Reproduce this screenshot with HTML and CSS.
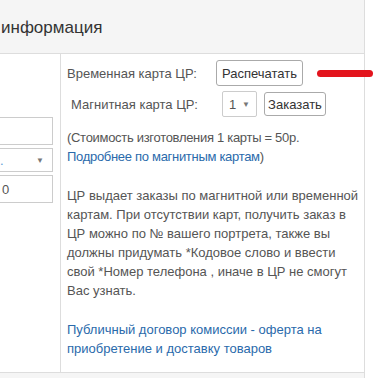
FILE: index.html
```html
<!DOCTYPE html>
<html>

<head>
  <title>Оформление заказа</title>
  <link rel="stylesheet" href="styles.css">
</head>

<body>
  <div class="panel">
    <div class="panel-heading">
      <h3 class="panel-title">информация</h3>
    </div>

    <div class="panel-body">
      <div class="col-left">
        <div class="field"></div>
        <div class="field field-select"><span class="field-value">.</span><span class="caret">&#9660;</span></div>
        <div class="field field-number"><span class="field-value">0</span></div>
      </div>

      <div class="col-right">
        <div class="card-row">
          <span class="card-label">Временная карта ЦР:</span>
          <button type="button" class="btn btn-print">Распечатать</button>
        </div>

        <div class="card-row">
          <span class="card-label card-label-indent">Магнитная карта ЦР:</span>
          <div class="select-small">1<span class="caret">&#9660;</span></div>
          <button type="button" class="btn btn-order">Заказать</button>
        </div>

        <p class="note note-price">
          (Стоимость изготовления 1 карты = 50р.<br>
          <a href="#">Подробнее по магнитным картам</a>)
        </p>

        <p class="note">
          ЦР выдает заказы по магнитной или временной картам. При отсутствии карт, получить заказ в ЦР можно по №
          вашего портрета, также вы должны придумать *Кодовое слово и ввести свой *Номер телефона , иначе в ЦР не
          смогут Вас узнать.
        </p>

        <p class="note note-last">
          <a href="#">Публичный договор комиссии - оферта на приобретение и доставку товаров</a>
        </p>
      </div>
    </div>

    <div class="panel-footer"></div>
  </div>

  <!-- red marker drawn over the page -->
  <span class="marker"></span>
</body>

</html>
```

FILE: styles.css
```css
body {
  margin: 0;
  font-family: "Liberation Sans", Arial, sans-serif;
  font-size: 13px;
  color: #555;
  background-color: #fff;
  overflow: hidden;
}

.panel {
  width: 366px;
  margin-left: -1px;
  border: 1px solid #ddd;
  border-top: none;
  box-sizing: border-box;
}

.panel-heading {
  height: 54px;
  display: flex;
  align-items: center;
  background-color: #f5f5f5;
  border-bottom: 1px solid #ddd;
  box-sizing: border-box;
  padding: 2px 0 0 1px;
}

.panel-title {
  margin: 0;
  font-weight: 400;
  font-size: 17px;
  color: #333;
}

.panel-body {
  display: flex;
}

.col-left {
  width: 61px;
  flex-shrink: 0;
  padding: 63px 8px 0 0;
  box-sizing: border-box;
  border-right: 1px solid #ddd;
  overflow: hidden;
  display: flex;
  flex-direction: column;
  gap: 3px;
}

.field {
  width: 90px;
  height: 28px;
  margin-left: -37px;
  border: 1px solid #ccc;
  box-sizing: border-box;
  background-color: #fff;
  display: flex;
  align-items: center;
  color: #555;
}

.field-select {
  height: 24px;
  padding: 0 8px 0 36px;
  justify-content: space-between;
}

.field-select .field-value {
  color: #5b9bd5;
}

.field-number {
  padding-left: 38px;
}

.caret {
  font-size: 8px;
  color: #777;
}

.col-right {
  flex: 1;
  padding: 6px 4px 0 6px;
}

.card-row {
  display: flex;
  align-items: center;
  margin-bottom: 5px;
}

.card-label {
  width: 149px;
  flex-shrink: 0;
}

.card-label-indent {
  padding-left: 4px;
  width: 151px;
}

.btn {
  font-family: "Liberation Sans", Arial, sans-serif;
  font-size: 13px;
  color: #333;
  background-color: #fff;
  border: 1px solid #aaa;
  border-radius: 3px;
  padding: 0 2px;
  cursor: pointer;
}

.btn-print {
  height: 26px;
  width: 87px;
}

.btn-order {
  height: 24px;
  width: 62px;
}

.select-small {
  width: 35px;
  height: 26px;
  border: 1px solid #ccc;
  border-radius: 2px;
  box-sizing: border-box;
  display: flex;
  align-items: center;
  justify-content: space-between;
  padding: 0 6px;
  margin-right: 7px;
  color: #555;
}

.note {
  margin: 11px 0 20px;
  line-height: 19px;
}

.note + .note {
  margin-top: 0;
}

.note-price {
  letter-spacing: -0.3px;
}

.note-last {
  margin-bottom: 14px;
}

a {
  color: #2a6aab;
  text-decoration: none;
}

.panel-footer {
  height: 10px;
  background-color: #f5f5f5;
  border-top: 1px solid #ddd;
}

.marker {
  position: absolute;
  left: 317px;
  top: 70px;
  width: 56px;
  height: 7px;
  border-radius: 4px;
  background-color: #e3141d;
}
```
